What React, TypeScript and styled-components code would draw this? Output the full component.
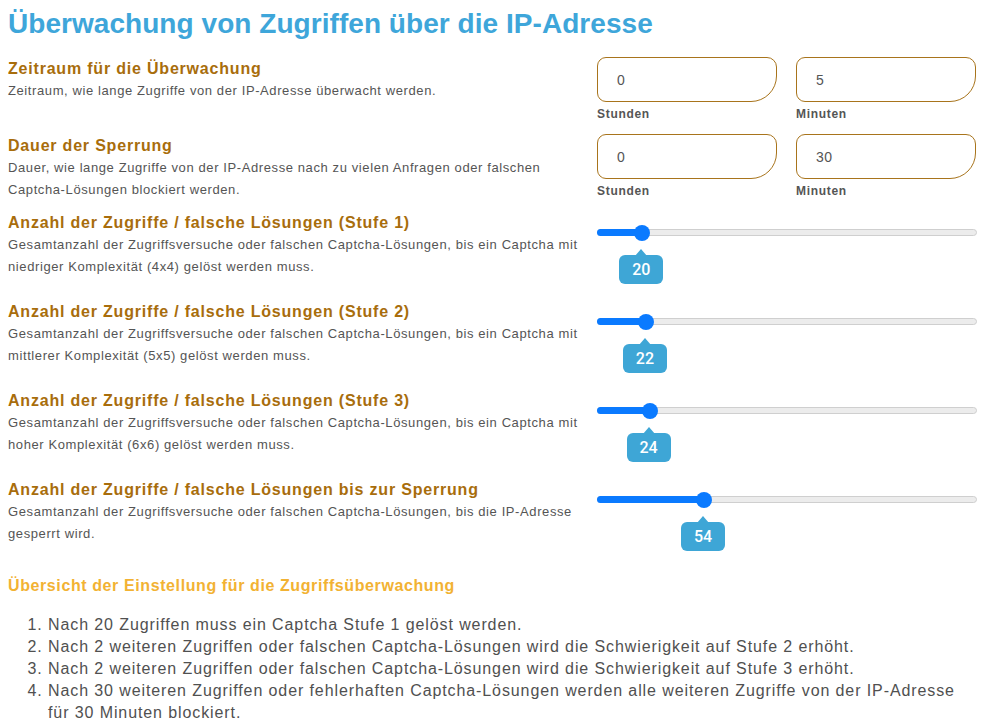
import React from "react";
import styled, { createGlobalStyle } from "styled-components";

const GlobalStyle = createGlobalStyle`
  html, body {
    margin: 0;
    padding: 0;
    background: #ffffff;
  }
  body {
    font-family: "Liberation Sans", Arial, sans-serif;
  }
`;

const Page = styled.div`
  padding: 6px 8px 0 8px;
  width: 989px;
  box-sizing: border-box;
`;

const Title = styled.h1`
  margin: 0;
  font-size: 28px;
  line-height: 35px;
  font-weight: 700;
  letter-spacing: 0.05px;
  color: #3ea6da;
`;

const Row = styled.div<{ $height: number }>`
  display: grid;
  grid-template-columns: 581px 380px;
  column-gap: 8px;
  height: ${(p) => p.$height}px;
  align-items: start;
`;

const TextCol = styled.div`
  padding-top: 2px;
`;

const Heading = styled.h2`
  margin: 0;
  font-size: 16px;
  line-height: 20px;
  font-weight: 700;
  letter-spacing: 0.8px;
  color: #a86d0c;
`;

const Desc = styled.p`
  margin: 1px 0 0 0;
  font-size: 13px;
  line-height: 22px;
  letter-spacing: 0.6px;
  color: #555555;
`;

const Inputs = styled.div`
  display: grid;
  grid-template-columns: 180px 180px;
  column-gap: 19px;
`;

const Field = styled.label`
  display: flex;
  flex-direction: column;
`;

const NumberBox = styled.input`
  box-sizing: border-box;
  width: 180px;
  height: 45px;
  border: 1px solid #a8741c;
  border-radius: 9px 10px 26px 9px;
  padding: 0 0 0 19px;
  font-family: "Liberation Sans", Arial, sans-serif;
  font-size: 14px;
  letter-spacing: 0.5px;
  color: #555555;
  background: #ffffff;
  outline: none;
`;

const FieldLabel = styled.span`
  margin-top: 5px;
  font-size: 12px;
  line-height: 14px;
  font-weight: 700;
  letter-spacing: 0.7px;
  color: #555555;
`;

const SliderWrap = styled.div`
  position: relative;
  width: 380px;
  height: 60px;
  margin-top: 18px;
`;

const Track = styled.div`
  position: relative;
  height: 7px;
  box-sizing: border-box;
  border: 1px solid #cfcfcf;
  background: #ececec;
  border-radius: 4px;
`;

const Fill = styled.div`
  position: absolute;
  left: -1px;
  top: -1px;
  height: 7px;
  background: #0a7aff;
  border-radius: 4px;
`;

const Thumb = styled.div`
  position: absolute;
  top: -5px;
  width: 16px;
  height: 16px;
  margin-left: -8px;
  border-radius: 50%;
  background: #0a7aff;
`;

const Bubble = styled.div`
  position: absolute;
  top: 26px;
  width: 44px;
  height: 29px;
  margin-left: -22px;
  border-radius: 6px;
  background: #3ea6d6;
  color: #ffffff;
  font-family: Roboto, "Liberation Sans", sans-serif;
  font-weight: 500;
  font-size: 16px;
  line-height: 29px;
  text-align: center;

  &::before {
    content: "";
    position: absolute;
    left: 50%;
    top: -6px;
    margin-left: -6px;
    border-left: 6px solid transparent;
    border-right: 6px solid transparent;
    border-bottom: 7px solid #3ea6d6;
  }
`;

const SummaryTitle = styled.h3`
  margin: 9px 0 0 0;
  font-size: 16px;
  line-height: 20px;
  font-weight: 700;
  letter-spacing: 0.6px;
  color: #f2b233;
`;

const List = styled.ol`
  margin: 18px 0 0 0;
  padding-left: 40px;
  font-size: 16px;
  line-height: 22px;
  letter-spacing: 0.9px;
  color: #505050;
`;

const Slider: React.FC<{ value: number; max: number }> = ({ value, max }) => {
  const pos = 8 + (value / max) * 363;
  return (
    <SliderWrap>
      <Track>
        <Fill style={{ width: pos }} />
        <Thumb style={{ left: pos }} />
      </Track>
      <Bubble style={{ left: pos }}>{value}</Bubble>
    </SliderWrap>
  );
};

const TimeInputs: React.FC<{ hours: number; minutes: number }> = ({
  hours,
  minutes,
}) => (
  <Inputs>
    <Field>
      <NumberBox type="text" defaultValue={hours} />
      <FieldLabel>Stunden</FieldLabel>
    </Field>
    <Field>
      <NumberBox type="text" defaultValue={minutes} />
      <FieldLabel>Minuten</FieldLabel>
    </Field>
  </Inputs>
);

const sliders = [
  {
    title: "Anzahl der Zugriffe / falsche Lösungen (Stufe 1)",
    lines: [
      "Gesamtanzahl der Zugriffsversuche oder falschen Captcha-Lösungen, bis ein Captcha mit",
      "niedriger Komplexität (4x4) gelöst werden muss.",
    ],
    value: 20,
  },
  {
    title: "Anzahl der Zugriffe / falsche Lösungen (Stufe 2)",
    lines: [
      "Gesamtanzahl der Zugriffsversuche oder falschen Captcha-Lösungen, bis ein Captcha mit",
      "mittlerer Komplexität (5x5) gelöst werden muss.",
    ],
    value: 22,
  },
  {
    title: "Anzahl der Zugriffe / falsche Lösungen (Stufe 3)",
    lines: [
      "Gesamtanzahl der Zugriffsversuche oder falschen Captcha-Lösungen, bis ein Captcha mit",
      "hoher Komplexität (6x6) gelöst werden muss.",
    ],
    value: 24,
  },
  {
    title: "Anzahl der Zugriffe / falsche Lösungen bis zur Sperrung",
    lines: [
      "Gesamtanzahl der Zugriffsversuche oder falschen Captcha-Lösungen, bis die IP-Adresse",
      "gesperrt wird.",
    ],
    value: 54,
  },
];

const App: React.FC = () => {
  return (
    <Page>
      <GlobalStyle />
      <Title>Überwachung von Zugriffen über die IP-Adresse</Title>

      <Row $height={77} style={{ marginTop: 16 }}>
        <TextCol>
          <Heading>Zeitraum für die Überwachung</Heading>
          <Desc>Zeitraum, wie lange Zugriffe von der IP-Adresse überwacht werden.</Desc>
        </TextCol>
        <TimeInputs hours={0} minutes={5} />
      </Row>

      <Row $height={77}>
        <TextCol>
          <Heading>Dauer der Sperrung</Heading>
          <Desc>
            Dauer, wie lange Zugriffe von der IP-Adresse nach zu vielen Anfragen oder falschen
            <br />
            Captcha-Lösungen blockiert werden.
          </Desc>
        </TextCol>
        <TimeInputs hours={0} minutes={30} />
      </Row>

      {sliders.map((s) => (
        <Row $height={89} key={s.title}>
          <TextCol>
            <Heading>{s.title}</Heading>
            <Desc>
              {s.lines[0]}
              <br />
              {s.lines[1]}
            </Desc>
          </TextCol>
          <Slider value={s.value} max={200} />
        </Row>
      ))}

      <SummaryTitle>Übersicht der Einstellung für die Zugriffsüberwachung</SummaryTitle>
      <List>
        <li>Nach 20 Zugriffen muss ein Captcha Stufe 1 gelöst werden.</li>
        <li>
          Nach 2 weiteren Zugriffen oder falschen Captcha-Lösungen wird die Schwierigkeit auf Stufe 2
          erhöht.
        </li>
        <li>
          Nach 2 weiteren Zugriffen oder falschen Captcha-Lösungen wird die Schwierigkeit auf Stufe 3
          erhöht.
        </li>
        <li>
          Nach 30 weiteren Zugriffen oder fehlerhaften Captcha-Lösungen werden alle weiteren Zugriffe
          von der IP-Adresse für 30 Minuten blockiert.
        </li>
      </List>
    </Page>
  );
};

export default App;
